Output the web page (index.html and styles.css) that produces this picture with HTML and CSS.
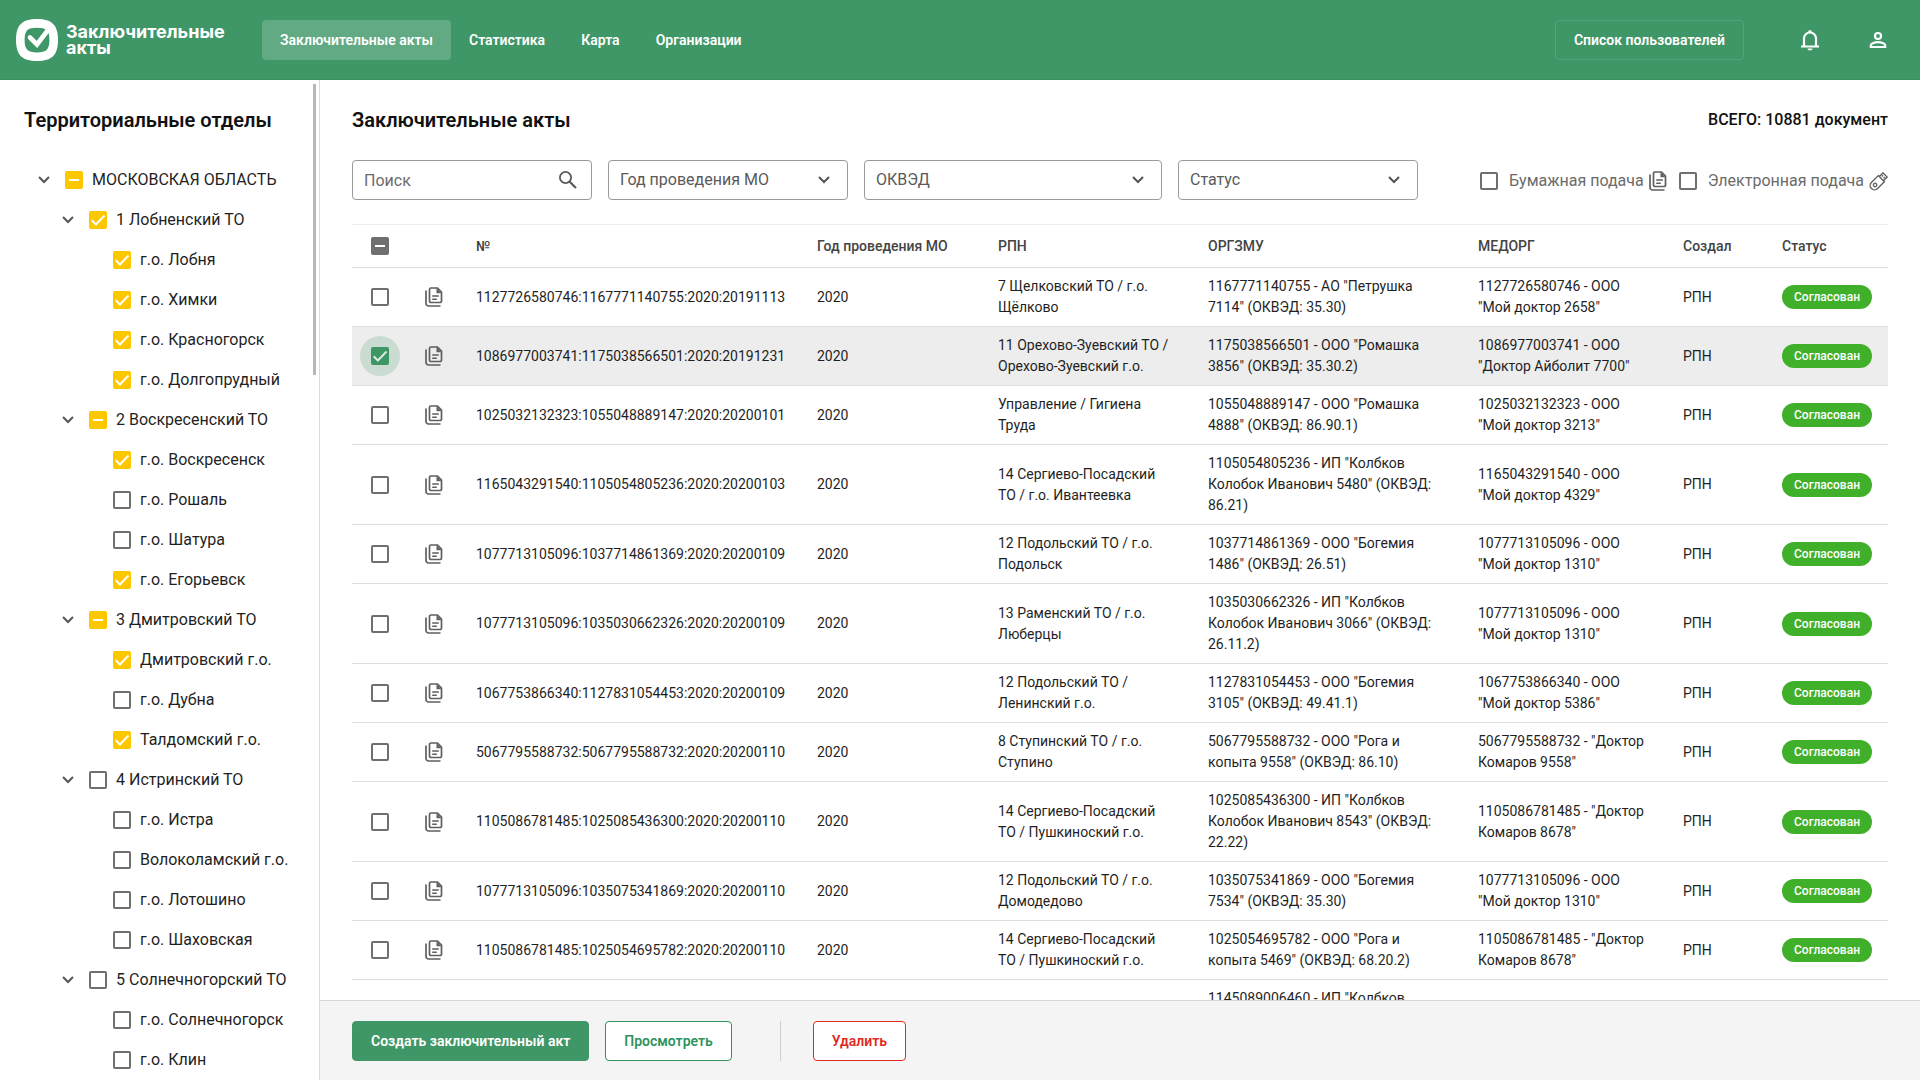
FILE: index.html
```html
<!DOCTYPE html>
<html lang="ru">
<head>
<meta charset="utf-8">
<title>Заключительные акты</title>
<link rel="stylesheet" href="styles.css">
</head>
<body>
<svg class="sprite" aria-hidden="true">
  <symbol id="i-chevron" viewBox="0 0 12 8"><path d="M1 1l5 5 5-5" fill="none" stroke="currentColor" stroke-width="2"/></symbol>
  <symbol id="i-docs" viewBox="0 0 18 20">
    <path d="M1 3.500v13a2.500 2.500 0 0 0 2.500 2.500H15.500" fill="none" stroke="currentColor" stroke-width="1.700"/>
    <path d="M6 1h6.500L16.500 5V14a1.500 1.500 0 0 1-1.500 1.500H6A1.500 1.500 0 0 1 4.500 14V2.500A1.500 1.500 0 0 1 6 1z" fill="none" stroke="currentColor" stroke-width="1.700"/>
    <path d="M11.500 1v5.200h5zM7.200 8.200h6.600v1.500H7.200zM7.200 11.400h4.600v1.500H7.200z" fill="currentColor"/>
  </symbol>
</svg>

<header class="topbar">
  <a class="brand" href="#">
    <svg class="brand-mark" viewBox="0 0 42 42" aria-hidden="true">
      <path d="M21 0C36 0 42 6 42 21S36 42 21 42 0 36 0 21 6 0 21 0z" fill="#fff"/>
      <path d="M21 8.800c9.500 0 12.400 2.900 12.400 12.200S30.500 33.400 21 33.400 8.600 30.500 8.600 21 11.500 8.800 21 8.800z" fill="#3f9666"/>
      <path d="M14 18.500l7 7L32 11" fill="none" stroke="#fff" stroke-width="4.600" stroke-linecap="round"/>
    </svg>
    <span class="brand-name">Заключительные<br>акты</span>
  </a>
  <nav class="nav">
    <a class="nav-link is-active" href="#">Заключительные акты</a>
    <a class="nav-link" href="#">Статистика</a>
    <a class="nav-link" href="#">Карта</a>
    <a class="nav-link" href="#">Организации</a>
  </nav>
  <button class="users-btn" type="button">Список пользователей</button>
  <button class="icon-btn" type="button" aria-label="Уведомления">
    <svg width="24" height="24" viewBox="0 0 24 24"><path d="M3 18.500h18M6 18V10.500a6 6 0 0 1 12 0V18" fill="none" stroke="#fff" stroke-width="2.200"/><path d="M10 4.500a2 2.500 0 0 1 4 0zM9.500 20.500h5a2.500 2 0 0 1-5 0z" fill="#fff"/></svg>
  </button>
  <button class="icon-btn" type="button" aria-label="Профиль">
    <svg width="24" height="24" viewBox="0 0 24 24"><path d="M12 5a3 3 0 1 1 0 6 3 3 0 0 1 0-6zM4.800 19v-1.500c0-2.300 4.300-3.300 7.200-3.300s7.200 1 7.200 3.300V19z" fill="none" stroke="#fff" stroke-width="2.200"/></svg>
  </button>
</header>

<div class="shell">
  <aside class="sidebar">
    <h2 class="heading">Территориальные отделы</h2>
    <ul class="tree">
      <li><div class="node"><svg class="chev"><use href="#i-chevron"/></svg><label><input class="box yellow partial" type="checkbox">МОСКОВСКАЯ ОБЛАСТЬ</label></div>
        <ul>
          <li><div class="node"><svg class="chev"><use href="#i-chevron"/></svg><label><input class="box yellow" type="checkbox" checked>1 Лобненский ТО</label></div>
            <ul>
              <li class="node leaf"><label><input class="box yellow" type="checkbox" checked>г.о. Лобня</label></li>
              <li class="node leaf"><label><input class="box yellow" type="checkbox" checked>г.о. Химки</label></li>
              <li class="node leaf"><label><input class="box yellow" type="checkbox" checked>г.о. Красногорск</label></li>
              <li class="node leaf"><label><input class="box yellow" type="checkbox" checked>г.о. Долгопрудный</label></li>
            </ul>
          </li>
          <li><div class="node"><svg class="chev"><use href="#i-chevron"/></svg><label><input class="box yellow partial" type="checkbox">2 Воскресенский ТО</label></div>
            <ul>
              <li class="node leaf"><label><input class="box yellow" type="checkbox" checked>г.о. Воскресенск</label></li>
              <li class="node leaf"><label><input class="box yellow" type="checkbox">г.о. Рошаль</label></li>
              <li class="node leaf"><label><input class="box yellow" type="checkbox">г.о. Шатура</label></li>
              <li class="node leaf"><label><input class="box yellow" type="checkbox" checked>г.о. Егорьевск</label></li>
            </ul>
          </li>
          <li><div class="node"><svg class="chev"><use href="#i-chevron"/></svg><label><input class="box yellow partial" type="checkbox">3 Дмитровский ТО</label></div>
            <ul>
              <li class="node leaf"><label><input class="box yellow" type="checkbox" checked>Дмитровский г.о.</label></li>
              <li class="node leaf"><label><input class="box yellow" type="checkbox">г.о. Дубна</label></li>
              <li class="node leaf"><label><input class="box yellow" type="checkbox" checked>Талдомский г.о.</label></li>
            </ul>
          </li>
          <li><div class="node"><svg class="chev"><use href="#i-chevron"/></svg><label><input class="box yellow" type="checkbox">4 Истринский ТО</label></div>
            <ul>
              <li class="node leaf"><label><input class="box yellow" type="checkbox">г.о. Истра</label></li>
              <li class="node leaf"><label><input class="box yellow" type="checkbox">Волоколамский г.о.</label></li>
              <li class="node leaf"><label><input class="box yellow" type="checkbox">г.о. Лотошино</label></li>
              <li class="node leaf"><label><input class="box yellow" type="checkbox">г.о. Шаховская</label></li>
            </ul>
          </li>
          <li><div class="node"><svg class="chev"><use href="#i-chevron"/></svg><label><input class="box yellow" type="checkbox">5 Солнечногорский ТО</label></div>
            <ul>
              <li class="node leaf"><label><input class="box yellow" type="checkbox">г.о. Солнечногорск</label></li>
              <li class="node leaf"><label><input class="box yellow" type="checkbox">г.о. Клин</label></li>
            </ul>
          </li>
        </ul>
      </li>
    </ul>
    <div class="scroll-thumb"></div>
  </aside>

  <main class="main">
    <div class="content">
      <div class="title-row">
        <h1 class="heading">Заключительные акты</h1>
        <p class="total">ВСЕГО: 10881 документ</p>
      </div>
      <form class="filters">
        <div class="field">
          <input type="text" placeholder="Поиск" aria-label="Поиск">
          <svg class="search-icon" viewBox="0 0 18 18"><circle cx="6.500" cy="6.500" r="5.600" fill="none" stroke="currentColor" stroke-width="1.800"/><path d="M10.500 10.500l6.500 6.500" stroke="currentColor" stroke-width="2.200"/></svg>
        </div>
        <div class="field">
          <select aria-label="Год проведения МО"><option>Год проведения МО</option></select>
          <svg class="chev"><use href="#i-chevron"/></svg>
        </div>
        <div class="field wide">
          <select aria-label="ОКВЭД"><option>ОКВЭД</option></select>
          <svg class="chev"><use href="#i-chevron"/></svg>
        </div>
        <div class="field">
          <select aria-label="Статус"><option>Статус</option></select>
          <svg class="chev"><use href="#i-chevron"/></svg>
        </div>
        <div class="modes">
          <label class="mode"><input class="box" type="checkbox"><span>Бумажная подача</span><svg class="docs"><use href="#i-docs"/></svg></label>
          <label class="mode"><input class="box" type="checkbox"><span>Электронная подача</span>
            <svg class="usb" viewBox="0 0 18 18" fill="none" stroke="currentColor" stroke-width="1.300"><g transform="rotate(45 9 9)"><path d="M4.900 5.200h8.200v9.200a4.100 4.100 0 0 1-8.200 0zM6.200 5V.2h5.600V5"/><circle cx="9" cy="13.600" r="1.600"/><path d="M7.800 1.800v1.600M10.200 1.800v1.600"/></g></svg></label>
        </div>
      </form>

      <table class="acts">
        <colgroup><col class="c-check"><col class="c-icon"><col><col class="c-year"><col class="c-rpn"><col class="c-org"><col class="c-med"><col class="c-author"><col class="c-status"></colgroup>
        <thead>
          <tr><th><input class="box partial" type="checkbox" aria-label="Выбрать все"></th><th></th><th>№</th><th>Год проведения МО</th><th>РПН</th><th>ОРГЗМУ</th><th>МЕДОРГ</th><th>Создал</th><th>Статус</th></tr>
        </thead>
        <tbody>
          <tr><td><input class="box" type="checkbox" aria-label="Выбрать"></td><td><svg class="docs"><use href="#i-docs"/></svg></td><td>1127726580746:1167771140755:2020:20191113</td><td>2020</td><td>7 Щелковский ТО / г.о. Щёлково</td><td>1167771140755 - АО "Петрушка 7114" (ОКВЭД: 35.30)</td><td>1127726580746 - ООО "Мой доктор 2658"</td><td>РПН</td><td><span class="chip">Согласован</span></td></tr>
          <tr class="selected"><td><input class="box" type="checkbox" checked aria-label="Выбрать"></td><td><svg class="docs"><use href="#i-docs"/></svg></td><td>1086977003741:1175038566501:2020:20191231</td><td>2020</td><td>11 Орехово-Зуевский ТО / Орехово-Зуевский г.о.</td><td>1175038566501 - ООО "Ромашка 3856" (ОКВЭД: 35.30.2)</td><td>1086977003741 - ООО "Доктор Айболит 7700"</td><td>РПН</td><td><span class="chip">Согласован</span></td></tr>
          <tr><td><input class="box" type="checkbox" aria-label="Выбрать"></td><td><svg class="docs"><use href="#i-docs"/></svg></td><td>1025032132323:1055048889147:2020:20200101</td><td>2020</td><td>Управление / Гигиена Труда</td><td>1055048889147 - ООО "Ромашка 4888" (ОКВЭД: 86.90.1)</td><td>1025032132323 - ООО "Мой доктор 3213"</td><td>РПН</td><td><span class="chip">Согласован</span></td></tr>
          <tr><td><input class="box" type="checkbox" aria-label="Выбрать"></td><td><svg class="docs"><use href="#i-docs"/></svg></td><td>1165043291540:1105054805236:2020:20200103</td><td>2020</td><td>14 Сергиево-Посадский ТО / г.о. Ивантеевка</td><td>1105054805236 - ИП "Колбков Колобок Иванович 5480" (ОКВЭД: 86.21)</td><td>1165043291540 - ООО "Мой доктор 4329"</td><td>РПН</td><td><span class="chip">Согласован</span></td></tr>
          <tr><td><input class="box" type="checkbox" aria-label="Выбрать"></td><td><svg class="docs"><use href="#i-docs"/></svg></td><td>1077713105096:1037714861369:2020:20200109</td><td>2020</td><td>12 Подольский ТО / г.о. Подольск</td><td>1037714861369 - ООО "Богемия 1486" (ОКВЭД: 26.51)</td><td>1077713105096 - ООО "Мой доктор 1310"</td><td>РПН</td><td><span class="chip">Согласован</span></td></tr>
          <tr><td><input class="box" type="checkbox" aria-label="Выбрать"></td><td><svg class="docs"><use href="#i-docs"/></svg></td><td>1077713105096:1035030662326:2020:20200109</td><td>2020</td><td>13 Раменский ТО / г.о. Люберцы</td><td>1035030662326 - ИП "Колбков Колобок Иванович 3066" (ОКВЭД: 26.11.2)</td><td>1077713105096 - ООО "Мой доктор 1310"</td><td>РПН</td><td><span class="chip">Согласован</span></td></tr>
          <tr><td><input class="box" type="checkbox" aria-label="Выбрать"></td><td><svg class="docs"><use href="#i-docs"/></svg></td><td>1067753866340:1127831054453:2020:20200109</td><td>2020</td><td>12 Подольский ТО / Ленинский г.о.</td><td>1127831054453 - ООО "Богемия 3105" (ОКВЭД: 49.41.1)</td><td>1067753866340 - ООО "Мой доктор 5386"</td><td>РПН</td><td><span class="chip">Согласован</span></td></tr>
          <tr><td><input class="box" type="checkbox" aria-label="Выбрать"></td><td><svg class="docs"><use href="#i-docs"/></svg></td><td>5067795588732:5067795588732:2020:20200110</td><td>2020</td><td>8 Ступинский ТО / г.о. Ступино</td><td>5067795588732 - ООО "Рога и копыта 9558" (ОКВЭД: 86.10)</td><td>5067795588732 - "Доктор Комаров 9558"</td><td>РПН</td><td><span class="chip">Согласован</span></td></tr>
          <tr><td><input class="box" type="checkbox" aria-label="Выбрать"></td><td><svg class="docs"><use href="#i-docs"/></svg></td><td>1105086781485:1025085436300:2020:20200110</td><td>2020</td><td>14 Сергиево-Посадский ТО / Пушкиноский г.о.</td><td>1025085436300 - ИП "Колбков Колобок Иванович 8543" (ОКВЭД: 22.22)</td><td>1105086781485 - "Доктор Комаров 8678"</td><td>РПН</td><td><span class="chip">Согласован</span></td></tr>
          <tr><td><input class="box" type="checkbox" aria-label="Выбрать"></td><td><svg class="docs"><use href="#i-docs"/></svg></td><td>1077713105096:1035075341869:2020:20200110</td><td>2020</td><td>12 Подольский ТО / г.о. Домодедово</td><td>1035075341869 - ООО "Богемия 7534" (ОКВЭД: 35.30)</td><td>1077713105096 - ООО "Мой доктор 1310"</td><td>РПН</td><td><span class="chip">Согласован</span></td></tr>
          <tr><td><input class="box" type="checkbox" aria-label="Выбрать"></td><td><svg class="docs"><use href="#i-docs"/></svg></td><td>1105086781485:1025054695782:2020:20200110</td><td>2020</td><td>14 Сергиево-Посадский ТО / Пушкиноский г.о.</td><td>1025054695782 - ООО "Рога и копыта 5469" (ОКВЭД: 68.20.2)</td><td>1105086781485 - "Доктор Комаров 8678"</td><td>РПН</td><td><span class="chip">Согласован</span></td></tr>
          <tr><td></td><td></td><td></td><td></td><td></td><td>1145089006460 - ИП "Колбков<br><br><br></td><td></td><td></td><td></td></tr>
        </tbody>
      </table>
    </div>
    <footer class="actions">
      <button class="btn primary" type="button">Создать заключительный акт</button>
      <button class="btn outline" type="button">Просмотреть</button>
      <span class="divider"></span>
      <button class="btn danger" type="button">Удалить</button>
    </footer>
  </main>
</div>
</body>
</html>
```
FILE: styles.css
```css
* { box-sizing: border-box; }

body {
  margin: 0;
  height: 100vh;
  display: flex;
  flex-direction: column;
  overflow: hidden;
  background: #fff;
  color: #1f1f1f;
  font: 400 16px/24px Roboto, sans-serif;
}

button, input, select { font: inherit; color: inherit; margin: 0; }
a { color: inherit; text-decoration: none; }
ul { list-style: none; margin: 0; padding: 0; }
svg { display: block; flex: none; }
.sprite { position: absolute; width: 0; height: 0; }

/* Top bar */
.topbar {
  flex: none;
  height: 80px;
  padding: 0 18px 0 16px;
  display: flex;
  align-items: center;
  background: #3f9666;
  border-bottom: 1px solid #38905f;
  color: #fff;
}
.brand { display: flex; align-items: center; gap: 8px; width: 246px; }
.brand-mark { width: 42px; height: 42px; }
.brand-name { font-family: Inter, sans-serif; font-size: 18px; line-height: 16px; font-weight: 700; white-space: nowrap; }
.nav { display: flex; flex: 1; }
.nav-link, .users-btn, .btn {
  height: 40px;
  padding: 0 18px;
  display: flex;
  align-items: center;
  justify-content: center;
  border: 0;
  border-radius: 4px;
  font-size: 14px;
  font-weight: 600;
  white-space: nowrap;
}
.nav-link.is-active { background: #62aa83; }
.users-btn { background: none; border: 1px solid #55a479; margin-right: 42px; }
.icon-btn {
  width: 48px; height: 48px;
  padding: 0;
  display: grid;
  place-items: center;
  border: 0;
  background: none;
}
.icon-btn + .icon-btn { margin-left: 20px; }

.shell { flex: 1; min-height: 0; display: flex; }

/* Checkboxes */
.box {
  appearance: none;
  flex: none;
  display: block;
  width: 18px;
  height: 18px;
  border: 2px solid #6f6f6f;
  border-radius: 2px;
  background: center / 18px 18px no-repeat;
}
.box:checked, .box.partial { border: 0; background-color: #3f9666; }
.box:checked { background-image: url("data:image/svg+xml,%3Csvg xmlns='http://www.w3.org/2000/svg' viewBox='0 0 18 18'%3E%3Cpath d='M2.700 9.300l4.200 4.200L15.500 4.500' fill='none' stroke='%23fff' stroke-width='2'/%3E%3C/svg%3E"); }
.box.partial {
  background-color: #6f6f6f;
  background-image: url("data:image/svg+xml,%3Csvg xmlns='http://www.w3.org/2000/svg' viewBox='0 0 18 18'%3E%3Cpath d='M4 9h10' stroke='%23fff' stroke-width='2'/%3E%3C/svg%3E");
}
.box.yellow:checked, .box.yellow.partial { background-color: #fdc800; }

/* Sidebar */
.sidebar {
  position: relative;
  flex: none;
  width: 320px;
  padding: 24px 0 0 24px;
  overflow: hidden;
  border-right: 1px solid #dcdcdc;
}
.heading { margin: 0; font-size: 20px; line-height: 32px; font-weight: 600; color: #111; }
.tree { padding: 24px 0 0 14px; white-space: nowrap; }
.tree ul { padding-left: 24px; }
.node { height: 40px; display: flex; align-items: center; gap: 15px; }
.node label { display: flex; align-items: center; gap: 9px; }
.node.leaf { padding-left: 27px; }
.chev { width: 12px; height: 8px; color: #555; }
.scroll-thumb {
  position: absolute;
  top: 4px;
  right: 3px;
  width: 3px;
  height: 291px;
  background: #b8b8b8;
}

/* Main area */
.main { flex: 1; min-width: 0; display: flex; flex-direction: column; }
.content { flex: 1; min-height: 0; overflow: hidden; padding: 24px 32px 0; }
.title-row { display: flex; align-items: center; justify-content: space-between; }
.total { margin: 0; font-weight: 500; color: #111; }

.filters { display: flex; gap: 16px; margin: 24px 0; }
.field {
  display: flex;
  align-items: center;
  position: relative;
  width: 240px;
  height: 40px;
  border: 1px solid #9a9a9a;
  border-radius: 4px;
  color: #5a5a5a;
}
.field.wide { width: 298px; }
.field input, .field select {
  appearance: none;
  width: 100%;
  height: 100%;
  border: 0;
  padding: 0 40px 0 11px;
  background: none;
  outline: 0;
}
.field input::placeholder { color: #6b6b6b; opacity: 1; }
.field svg { position: absolute; right: 17px; pointer-events: none; }
.field .search-icon { width: 18px; height: 18px; right: 14px; }
.modes { display: flex; align-items: center; gap: 12px; margin-left: auto; padding-top: 2px; color: #6b6b6b; }
.mode { display: flex; align-items: center; white-space: nowrap; }
.mode span { padding: 0 5px 0 11px; }
.docs { width: 18px; height: 20px; color: #5f5f5f; }
.usb { width: 19px; height: 19px; color: #5f5f5f; }

/* Table */
.acts {
  width: 100%;
  table-layout: fixed;
  border-collapse: collapse;
  border-top: 1px solid #ececec;
  font-size: 14px;
  line-height: 21px;
}
.c-check { width: 56px; }
.c-icon { width: 52px; }
.c-year { width: 181px; }
.c-rpn { width: 210px; }
.c-org { width: 270px; }
.c-med { width: 205px; }
.c-author { width: 99px; }
.c-status { width: 122px; }
.acts th, .acts td {
  padding: 8px 16px;
  text-align: left;
  vertical-align: middle;
  border-bottom: 1px solid #dedede;
}
.acts th { padding: 11px 16px 10px; font-weight: 500; color: #444; white-space: nowrap; }
.acts tr > :first-child { padding: 0 19px; }
.acts td:nth-child(2) { padding: 0 17px; }
.acts .selected { background: #ededed; }
.acts .selected .box { position: relative; }
.acts .selected .box::before {
  content: "";
  position: absolute;
  inset: -11px;
  border-radius: 50%;
  background: #3f966633;
}
.chip {
  display: inline-block;
  height: 24px;
  padding: 0 12px;
  border-radius: 12px;
  background: #40b02a;
  color: #fff;
  font-size: 12px;
  line-height: 24px;
  font-weight: 500;
  vertical-align: middle;
}

/* Bottom bar */
.actions {
  flex: none;
  height: 80px;
  padding: 0 32px;
  display: flex;
  align-items: center;
  gap: 16px;
  background: #f4f4f4;
  border-top: 1px solid #d6d6d6;
}
.btn { border: 1px solid; }
.primary { background: #3f9666; color: #fff; border-color: #3f9666; }
.outline { background: #fff; color: #2f9460; }
.danger { background: #fff; color: #e02a1f; }
.divider { width: 1px; height: 40px; margin: 0 16px 0 32px; background: #d0d0d0; }
```
